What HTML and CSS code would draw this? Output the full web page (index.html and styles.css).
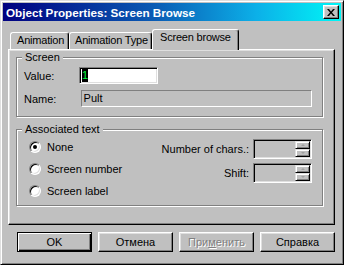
FILE: index.html
```html
<!DOCTYPE html>
<html>
<head>
  <meta charset="UTF-8">
  <title>Object Properties: Screen Browse</title>
  <link rel="stylesheet" href="styles.css">
</head>
<body>
  <div class="window">
    <div class="titlebar">
      <span class="title">Object Properties: Screen Browse</span>
      <span class="close">
        <svg width="8" height="7" viewBox="0 0 8 7"><path d="M0 0h2l2 2.4L6 0h2L5 3.5 8 7H6L4 4.6 2 7H0l3-3.5z" fill="#000"/></svg>
      </span>
    </div>

    <div class="dialog">
      <div class="tabs">
        <div class="tab tab-anim">Animation</div>
        <div class="tab tab-type">Animation Type</div>
        <div class="tab active">Screen browse</div>
      </div>

      <div class="panel">
        <fieldset class="group group-screen">
          <legend>Screen</legend>
          <div class="row">
            <label class="lbl lbl-value">Value:</label>
            <div class="edit"><span class="sel">1</span></div>
          </div>
          <div class="row row-name">
            <label class="lbl lbl-name">Name:</label>
            <div class="static">Pult</div>
          </div>
        </fieldset>

        <fieldset class="group group-assoc">
          <legend>Associated text</legend>
          <div class="assoc">
            <div class="radios">
              <div class="radio"><span class="circle checked"></span>None</div>
              <div class="radio"><span class="circle"></span>Screen number</div>
              <div class="radio"><span class="circle"></span>Screen label</div>
            </div>
            <div class="counts">
              <label class="count-lbl">Number of chars.:</label>
              <div class="spin">
                <div class="spin-btns">
                  <span class="spin-btn"><i class="arrow up"></i></span>
                  <span class="spin-btn"><i class="arrow down"></i></span>
                </div>
              </div>
              <label class="count-lbl">Shift:</label>
              <div class="spin">
                <div class="spin-btns">
                  <span class="spin-btn"><i class="arrow up"></i></span>
                  <span class="spin-btn"><i class="arrow down"></i></span>
                </div>
              </div>
            </div>
          </div>
        </fieldset>
      </div>

      <div class="buttons">
        <button class="btn default">OK</button>
        <button class="btn">Отмена</button>
        <button class="btn disabled">При<u>м</u>енить</button>
        <button class="btn">Справка</button>
      </div>
    </div>
  </div>
</body>
</html>
```

FILE: styles.css
```css
body { margin: 0; background: #c0c0c0; font-family: "Liberation Sans", Arial, sans-serif; font-size: 11px; color: #000; }

.window { width: 344px; height: 265px; box-sizing: border-box; padding: 2px; background: #c0c0c0;
  border: 1px solid; border-color: #dfdfdf #000 #000 #dfdfdf;
  box-shadow: inset 1px 1px #fff, inset -1px -1px #808080; }

.titlebar { height: 18px; display: flex; align-items: center; padding-left: 3px;
  background: linear-gradient(90deg, #000080 0%, #0a5cb4 45%, #0cb0e8 75%, #00f6f6 100%); }
.title { color: #fff; font-weight: bold; font-size: 11.7px; white-space: nowrap; }
.close { margin-left: auto; margin-right: 2px; width: 16px; height: 14px; box-sizing: border-box;
  display: flex; align-items: center; justify-content: center; background: #c0c0c0;
  border: 1px solid; border-color: #fff #000 #000 #fff;
  box-shadow: inset -1px -1px #808080, inset 1px 1px #dfdfdf; }

.dialog { padding: 8px 6px 0 5px; }

/* tab strip */
.tabs { display: flex; align-items: flex-end; height: 20px; padding-left: 2px; }
.tab { height: 17px; box-sizing: border-box; padding: 1px 0 0 6px; line-height: 13px; white-space: nowrap; letter-spacing: -0.2px;
  border: 1px solid; border-color: #fff #000 transparent #fff; border-bottom: none;
  border-radius: 3px 3px 0 0; box-shadow: inset -1px 0 #808080; }
.tab-anim { width: 59px; }
.tab-type { width: 83px; padding-left: 5px; }
.tab.active { width: 87px; height: 21px; margin-bottom: -1px; padding-left: 7px;
  position: relative; z-index: 1; background: #c0c0c0; }

.panel { height: 176px; box-sizing: border-box; padding: 1px 0 0 7px;
  border: 1px solid; border-color: #fff #000 #000 #fff;
  box-shadow: inset -1px -1px #808080, inset 1px 1px #dfdfdf; }

/* group boxes */
.group { width: 307px; box-sizing: border-box; margin: 0; min-width: 0; padding: 0 10px 9px 5px;
  border: 1px solid #808080; box-shadow: 1px 1px #fff, inset 1px 1px #fff; }
.group legend { padding: 0 3px; line-height: 13px; background: #c0c0c0; }
.group-assoc { margin-top: 6px; padding-bottom: 3px; }

.row { display: flex; align-items: center; padding: 3px 0 0 2px; }
.row-name { padding-top: 6px; }
.lbl-value { width: 55px; }
.lbl-name { width: 57px; }

.edit { width: 79px; height: 17px; box-sizing: border-box; padding: 1px 0 0 2px; background: #fff;
  border: 1px solid; border-color: #808080 #fff #fff #808080;
  box-shadow: inset 1px 1px #000, inset -1px -1px #dfdfdf; }
.sel { display: inline-block; height: 13px; line-height: 13px; background: #000; color: #00ff40; vertical-align: top; }

.static { width: 233px; height: 17px; box-sizing: border-box; padding-left: 2px; line-height: 15px;
  border: 1px solid; border-color: #808080 #fff #fff #808080; }

/* associated text */
.assoc { display: flex; justify-content: space-between; }
.radios { padding-left: 7px; }
.radio { display: flex; align-items: center; height: 22px; }
.circle { width: 12px; height: 12px; box-sizing: border-box; border-radius: 50%; margin-right: 6px;
  display: flex; align-items: center; justify-content: center; background: #fff;
  border: 1px solid; border-color: #808080 #fff #fff #808080;
  box-shadow: inset 1px 1px #000, inset -1px -1px #dfdfdf; }
.circle.checked::after { content: ""; width: 4px; height: 4px; border-radius: 50%; background: #000; }

.counts { display: grid; grid-template-columns: auto 59px; gap: 4px; align-items: center; margin-top: 3px; align-self: flex-start; }
.count-lbl { justify-self: end; }
.spin { height: 20px; box-sizing: border-box; padding: 1px; display: flex; justify-content: flex-end;
  border: 1px solid; border-color: #808080 #fff #fff #808080;
  box-shadow: inset 1px 1px #000, inset -1px -1px #dfdfdf; }
.spin-btns { display: flex; flex-direction: column; width: 15px; }
.spin-btn { height: 8px; box-sizing: border-box; display: flex; align-items: center; justify-content: center;
  border: 1px solid; border-color: #dfdfdf #000 #000 #dfdfdf;
  box-shadow: inset 1px 1px #fff, inset -1px -1px #808080; }
.arrow { width: 0; height: 0; border-left: 2px solid transparent; border-right: 2px solid transparent; }
.arrow.up { border-bottom: 2px solid #a0a0a0; }
.arrow.down { border-top: 2px solid #a0a0a0; }

/* bottom buttons */
.buttons { display: flex; gap: 6px; padding: 7px 0 0 9px; }
.btn { width: 75px; height: 20px; box-sizing: border-box; padding: 0; font: inherit; color: #000; background: #c0c0c0;
  border: 1px solid; border-color: #fff #000 #000 #fff;
  box-shadow: inset -1px -1px #808080, inset 1px 1px #dfdfdf; }
.btn.default { border-color: #000; box-shadow: inset 1px 1px #fff, inset -1px -1px #000, inset -2px -2px #808080; }
.btn.disabled { color: #808080; text-shadow: 1px 1px #fff; }
```
